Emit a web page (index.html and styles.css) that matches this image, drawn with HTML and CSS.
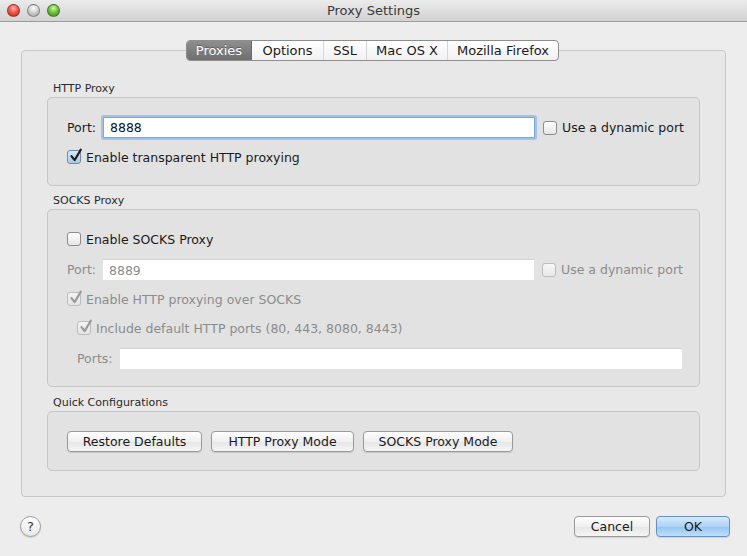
FILE: index.html
```html
<!DOCTYPE html>
<html>
<head>
<meta charset="utf-8">
<link rel="stylesheet" href="styles.css">
</head>
<body>
<div class="window">
  <div class="titlebar">
    <div class="lights">
      <span class="light red"></span>
      <span class="light gray"></span>
      <span class="light green"></span>
    </div>
    <div class="title">Proxy Settings</div>
  </div>
  <div class="content">
    <div class="tabbox">
      <div class="tabs">
        <span class="tab sel t1">Proxies</span>
        <span class="tab t2">Options</span>
        <span class="tab t3">SSL</span>
        <span class="tab t4">Mac OS X</span>
        <span class="tab last t5">Mozilla Firefox</span>
      </div>

      <div class="section-label first">HTTP Proxy</div>
      <div class="group g1">
        <div class="row port-row">
          <span class="lbl">Port:</span>
          <div class="input focus">8888</div>
          <span class="cb"></span><span class="cbtext">Use a dynamic port</span>
        </div>
        <div class="row check-row">
          <span class="cb checked"><svg viewBox="0 0 16 16" width="16" height="16"><path d="M3.5 8.2 L6.6 12.2 L12.8 1.6" fill="none" stroke="#1e1e1e" stroke-width="2.2" stroke-linecap="round" stroke-linejoin="round"/></svg></span><span class="cbtext">Enable transparent HTTP proxying</span>
        </div>
      </div>

      <div class="section-label">SOCKS Proxy</div>
      <div class="group g2">
        <div class="row check-row r-enable">
          <span class="cb"></span><span class="cbtext">Enable SOCKS Proxy</span>
        </div>
        <div class="row port-row dis">
          <span class="lbl">Port:</span>
          <div class="input disabled">8889</div>
          <span class="cb"></span><span class="cbtext">Use a dynamic port</span>
        </div>
        <div class="row check-row dis r-http">
          <span class="cb checked"><svg viewBox="0 0 16 16" width="16" height="16"><path d="M3.5 8.2 L6.6 12.2 L12.8 1.6" fill="none" stroke="#9a9a9a" stroke-width="2.2" stroke-linecap="round" stroke-linejoin="round"/></svg></span><span class="cbtext">Enable HTTP proxying over SOCKS</span>
        </div>
        <div class="row check-row dis indent r-incl">
          <span class="cb checked"><svg viewBox="0 0 16 16" width="16" height="16"><path d="M3.5 8.2 L6.6 12.2 L12.8 1.6" fill="none" stroke="#9a9a9a" stroke-width="2.2" stroke-linecap="round" stroke-linejoin="round"/></svg></span><span class="cbtext">Include default HTTP ports (80, 443, 8080, 8443)</span>
        </div>
        <div class="row ports-row dis">
          <span class="lbl">Ports:</span>
          <div class="input disabled wide"></div>
        </div>
      </div>

      <div class="section-label l3">Quick Configurations</div>
      <div class="group g3">
        <button class="btn b1">Restore Defaults</button>
        <button class="btn b2">HTTP Proxy Mode</button>
        <button class="btn b3">SOCKS Proxy Mode</button>
      </div>
    </div>

    <div class="footer">
      <span class="help">?</span>
      <div class="spacer"></div>
      <button class="btn cancel">Cancel</button>
      <button class="btn ok">OK</button>
    </div>
  </div>
</div>
</body>
</html>
```

FILE: styles.css
```css
* { box-sizing: border-box; }
html, body { margin: 0; padding: 0; }
body {
  width: 747px;
  height: 556px;
  overflow: hidden;
  font-family: "DejaVu Sans", "Noto Sans", sans-serif;
  font-size: 12.5px;
  color: #1a1a1a;
  background: #ededed;
}
.window { display: flex; flex-direction: column; height: 556px; }
.titlebar {
  height: 22px;
  flex: none;
  background: linear-gradient(#ebebeb, #d2d2d2);
  border-bottom: 1px solid #9c9c9c;
  position: relative;
  display: flex;
  align-items: center;
  justify-content: center;
}
.lights { position: absolute; left: 7px; top: 4px; display: flex; gap: 7px; }
.light { width: 13px; height: 13px; border-radius: 50%; display: block; border: 1px solid rgba(0,0,0,0.35); }
.light.red { background: radial-gradient(circle at 50% 30%, #ffb3a8 0, #f3584b 45%, #b8231a 100%); }
.light.gray { background: radial-gradient(circle at 50% 30%, #ffffff 0, #d2d2d2 45%, #9e9e9e 100%); }
.light.green { background: radial-gradient(circle at 50% 30%, #d8f6a6 0, #6fc33c 45%, #3c8a16 100%); }
.title { font-size: 13px; color: #3a3a3a; }

.content { flex: 1; display: flex; flex-direction: column; padding: 0 21px; }
.tabbox {
  margin-top: 28px;
  height: 447px;
  background: #e8e8e8;
  border: 1px solid #c8c8c8;
  border-radius: 4px;
  padding: 0 25px;
  display: flex;
  flex-direction: column;
}
.tabs {
  align-self: center;
  margin-top: -11px;
  margin-left: -2px;
  display: flex;
  height: 21px;
  border: 1px solid #8e8e8e;
  border-radius: 4px;
  background: linear-gradient(#ffffff, #f1f1f1);
  overflow: hidden;
}
.tab {
  display: flex;
  align-items: center;
  justify-content: center;
  font-size: 13px;
  color: #1a1a1a;
  border-right: 1px solid #d6d6d6;
  white-space: nowrap;
}
.t1 { width: 65px; }
.t2 { width: 72px; }
.t3 { width: 43px; }
.t4 { width: 81px; }
.t5 { width: 110px; }
.tab.last { border-right: none; }
.tab.sel {
  background: linear-gradient(#8e8e8e, #6f6f6f);
  color: #fff;
  border-right: 1px solid #6a6a6a;
  text-shadow: 0 -1px 0 rgba(0,0,0,0.3);
}

.section-label { font-size: 11px; color: #2a2a2a; margin-left: 6px; height: 12px; line-height: 12px; margin-bottom: 2px; margin-top: 9px; white-space: nowrap; }
.section-label.first { margin-top: 22px; }
.section-label.l3 { margin-top: 10px; }
.group {
  background: #e2e2e2;
  border: 1px solid #c6c6c6;
  border-radius: 5px;
  display: flex;
  flex-direction: column;
  flex: none;
}
.g1 { height: 89px; padding: 18px 17px 0 19px; }
.g2 { height: 178px; padding: 20px 17px 0 19px; }
.g3 { height: 60px; flex-direction: row; align-items: center; padding: 0 0 0 19px; gap: 9px; }

.row { display: flex; align-items: center; }
.port-row { height: 23px; }
.check-row { height: 18px; }
.g1 .check-row { margin-top: 9px; }
.g2 .port-row { height: 21px; margin-top: 11px; }
.r-http { margin-top: 10px; }
.r-incl { margin-top: 11px; }
.indent { padding-left: 10px; }
.ports-row { margin-top: 11px; height: 21px; padding-left: 10px; }

.lbl { width: 36px; flex: none; }
.ports-row .lbl { width: 43px; }
.dis { color: #8c8c8c; }
.input {
  width: 432px;
  height: 21px;
  background: #fff;
  display: flex;
  align-items: center;
  padding-left: 6px;
  font-size: 12.5px;
  margin-right: 8px;
  flex: none;
}
.input.focus {
  border: 1px solid #7aa7d8;
  box-shadow: 0 0 0 2px #9cc4ee;
  border-radius: 1px;
  color: #111;
}
.input.disabled { height: 21px; border-top: 1px solid #d4d4d4; color: #8c8c8c; width: 431px; }
.input.wide { width: 562px; margin-right: 0; }

.cb {
  width: 14px;
  height: 14px;
  flex: none;
  border: 1px solid #8c8c8c;
  border-radius: 3px;
  background: linear-gradient(#ffffff, #e6e6e6);
  margin-right: 5px;
  position: relative;
}
.cb svg { position: absolute; left: 0; top: -3px; }
.cb.checked { background: linear-gradient(#d7e8f8, #a8cbe9); border-color: #6e8aa8; }
.dis .cb { border-color: #bdbdbd; background: linear-gradient(#f7f7f7, #e8e8e8); }
.dis .cb.checked { background: linear-gradient(#f4f4f4, #e4e4e4); }
.cbtext { white-space: nowrap; }

.btn {
  font-family: "DejaVu Sans", "Noto Sans", sans-serif;
  font-size: 12.5px;
  color: #1a1a1a;
  height: 21px;
  border: 1px solid #9a9a9a;
  border-radius: 4px;
  background: linear-gradient(#ffffff, #f0f0f0 50%, #e6e6e6 51%, #f5f5f5);
  padding: 0;
  box-shadow: 0 1px 1px rgba(0,0,0,0.12);
  flex: none;
}
.b1 { width: 135px; }
.b2 { width: 143px; }
.b3 { width: 150px; }

.footer { display: flex; align-items: center; height: 59px; margin-left: -1px; margin-right: -4px; }
.help {
  width: 21px;
  height: 21px;
  border-radius: 50%;
  border: 1px solid #9a9a9a;
  background: linear-gradient(#ffffff, #e8e8e8);
  display: flex;
  align-items: center;
  justify-content: center;
  font-size: 13px;
  color: #333;
  box-shadow: 0 1px 1px rgba(0,0,0,0.12);
}
.spacer { flex: 1; }
.cancel { width: 76px; margin-right: 6px; }
.ok {
  width: 74px;
  border-color: #6a8fc2;
  background: linear-gradient(#d5eafc, #aed3f7 50%, #93c4f3 51%, #bfdffa);
}
```
